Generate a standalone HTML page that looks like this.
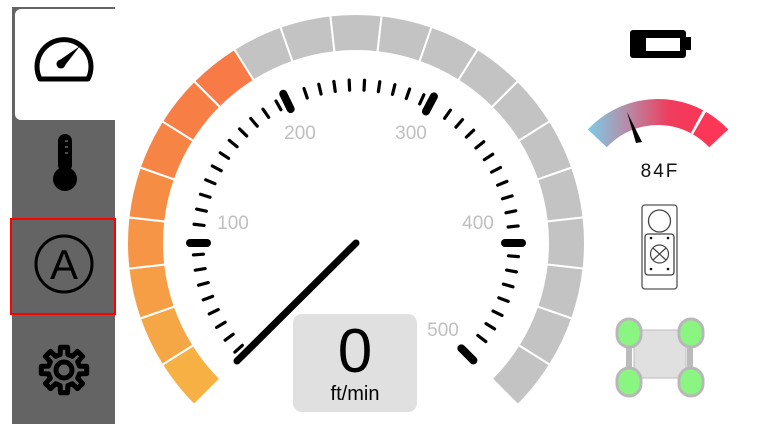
<!DOCTYPE html>
<html><head><meta charset="utf-8"><style>
html,body{margin:0;padding:0;background:#fff;width:763px;height:424px;overflow:hidden;font-family:"Liberation Sans",sans-serif}
#side{position:absolute;left:12px;top:7px;width:103px;height:417px;background:#646464}
#tab{position:absolute;left:15px;top:9px;width:101px;height:111px;background:#fff;border-radius:6px 0 0 6px}
#sel{position:absolute;left:10px;top:218px;width:102px;height:93px;border:2px solid #f00}
svg{position:absolute;left:0;top:0}
</style></head><body>
<div id="side"></div><div id="tab"></div><div id="sel"></div>
<svg id="g" width="763" height="424" viewBox="0 0 763 424">
<defs>
<linearGradient id="tg" x1="0" x2="1"><stop offset="0" stop-color="#7ccbe6"/><stop offset="0.35" stop-color="#b88aa6"/><stop offset="0.7" stop-color="#ee3d5e"/><stop offset="1" stop-color="#fb3656"/></linearGradient>
</defs>
<g fill="none" stroke="#000" stroke-width="5" stroke-linecap="round" stroke-linejoin="round">
<path d="M40 79 A27 27 0 1 1 88 79 Z" />
</g>
<circle cx="61" cy="64" r="4.5" fill="#000"/>
<path d="M58.2 61.1 L80 46 L63.8 66.9 Z" fill="#000"/>
<rect x="58" y="134" width="14" height="38" rx="7" fill="#000"/>
<circle cx="65" cy="179" r="12" fill="#000"/>
<path d="M65 141 h3 M65 147 h3 M65 153 h3" stroke="#646464" stroke-width="1.5"/>
<circle cx="64" cy="264" r="28" fill="none" stroke="#000" stroke-width="3"/>
<text x="64" y="279" text-anchor="middle" font-size="42" font-family="Liberation Sans" fill="#000">A</text>
<g transform="translate(64,370)">
<path id="gear" fill="none" stroke="#000" stroke-width="5" stroke-linejoin="round"/>
<circle r="8" fill="none" stroke="#000" stroke-width="5"/>
</g>
<g id="arc"></g>
<g id="ticks" stroke="#000" stroke-linecap="round"></g>
<g font-size="19" fill="#c0c0c0" font-family="Liberation Sans">
<text x="233" y="229" text-anchor="middle">100</text>
<text x="300" y="139" text-anchor="middle">200</text>
<text x="411" y="139" text-anchor="middle">300</text>
<text x="478" y="229" text-anchor="middle">400</text>
<text x="443" y="336" text-anchor="middle">500</text>
</g>
<rect x="293" y="314" width="124" height="98" rx="9" fill="#e0e0e0"/>
<text x="355" y="372" text-anchor="middle" font-size="62" fill="#000">0</text>
<text x="355" y="400" text-anchor="middle" font-size="20" fill="#000">ft/min</text>
<line x1="237" y1="361" x2="356" y2="243" stroke="#000" stroke-width="7" stroke-linecap="round"/>
<rect x="630" y="30" width="56" height="28" rx="3" fill="#000"/>
<rect x="686" y="37" width="5" height="13" fill="#000"/>
<rect x="646" y="38" width="34" height="13" fill="#fff"/>
<path id="t1" fill="url(#tg)"/>
<path id="t2" fill="#fb3656"/>
<path d="M627 112 L642 142 L636 143 Z" fill="#000"/>
<text x="660" y="177" text-anchor="middle" font-size="19" letter-spacing="2" fill="#111">84F</text>
<rect x="642" y="205" width="35" height="84" rx="3" fill="#fff" stroke="#555" stroke-width="1.3"/>
<circle cx="659.5" cy="221" r="11" fill="none" stroke="#444" stroke-width="1.3"/>
<rect x="645" y="234" width="29" height="41" rx="3" fill="none" stroke="#444" stroke-width="1.3"/>
<circle cx="659.5" cy="254" r="9" fill="none" stroke="#444" stroke-width="1.2"/>
<path d="M653 248 L666 260 M666 248 L653 260" stroke="#444" stroke-width="1.2"/>
<g fill="#111"><circle cx="651" cy="238" r="1.3"/><circle cx="668" cy="238" r="1.3"/><circle cx="651" cy="269" r="1.3"/><circle cx="668" cy="269" r="1.3"/></g>
<rect x="634" y="330" width="52" height="48" fill="#e0e0e0" stroke="#bbb"/>
<path d="M629 345 V370 M690 345 V370" stroke="#bbb" stroke-width="6"/>
<g fill="#8bf582" stroke="#b8b8b8" stroke-width="3">
<rect x="617" y="319" width="24" height="28" rx="12"/><rect x="679" y="319" width="24" height="28" rx="12"/>
<rect x="617" y="368" width="24" height="28" rx="12"/><rect x="679" y="368" width="24" height="28" rx="12"/>
</g>
</svg>
<script>
var cx=356,cy=243,R=229,r=192;
function P(a,rad){a=a*Math.PI/180;return [cx+rad*Math.cos(a),cy-rad*Math.sin(a)];}
function seg(a1,a2,R,r,cx0,cy0){var s=function(a,rr){a=a*Math.PI/180;return (cx0+rr*Math.cos(a)).toFixed(2)+' '+(cy0-rr*Math.sin(a)).toFixed(2);};
return 'M'+s(a1,R)+' A'+R+' '+R+' 0 0 1 '+s(a2,R)+' L'+s(a2,r)+' A'+r+' '+r+' 0 0 0 '+s(a1,r)+'Z';}
var h='',n=21,st=270/n;
var cols=['#f6b043','#f5a745','#f59e45','#f69546','#f68d45','#f68545','#f77f46','#f77a47'];
for(var i=0;i<n;i++){var a1=225-i*st,a2=a1-st;
h+='<path d="'+seg(a1,a2,R,r,cx,cy)+'" fill="'+(i<8?cols[i]:'#c3c3c3')+'" stroke="#fff" stroke-width="2"/>';}
document.getElementById('arc').innerHTML=h;
var majors=[180,116,62,0,-45];var t='';
majors.forEach(function(a){var p=P(a,149),q=P(a,166);t+='<line x1="'+p[0]+'" y1="'+p[1]+'" x2="'+q[0]+'" y2="'+q[1]+'" stroke-width="8"/>';});
for(var a=222;a>-44;a-=5.4){var near=majors.some(function(m){return Math.abs(m-a)<2.5;});if(near)continue;
var p=P(a,153),q=P(a,163);t+='<line x1="'+p[0]+'" y1="'+p[1]+'" x2="'+q[0]+'" y2="'+q[1]+'" stroke-width="3.2"/>';}
document.getElementById('ticks').innerHTML=t;
document.getElementById('t1').setAttribute('d',seg(137,62,96,70,658,195));
document.getElementById('t2').setAttribute('d',seg(60,43,96,70,658,195));
var g='',N=8;function pt(ang,rr){ang=ang*Math.PI/180;return (rr*Math.cos(ang)).toFixed(2)+' '+(rr*Math.sin(ang)).toFixed(2);}
for(var k=0;k<N;k++){var b=k*360/N;
g+=(k?'L':'M')+pt(b-14,16)+' L'+pt(b-9,23)+' L'+pt(b+9,23)+' L'+pt(b+14,16)+' ';}
document.getElementById('gear').setAttribute('d',g+'Z');
</script>
</body></html>
